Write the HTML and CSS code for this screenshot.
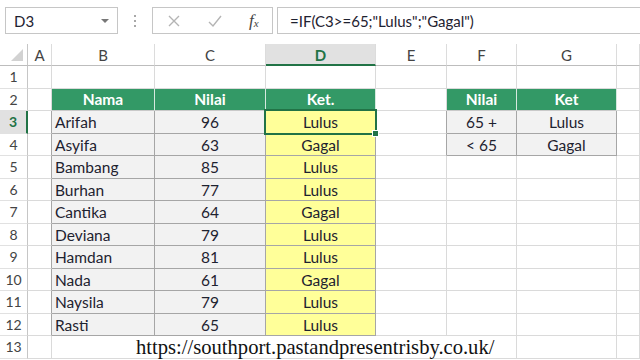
FILE: index.html
```html
<!DOCTYPE html>
<html lang="id">
<head>
  <meta charset="UTF-8">
  <title>Rumus IF - Nilai Siswa</title>
  <link rel="stylesheet" href="styles.css">
</head>
<body>
  <div class="toolbar">
    <div class="namebox">
      <span>D3</span>
      <span class="caret"></span>
    </div>
    <div class="dots"><i></i><i></i><i></i></div>
    <div class="fbuttons">
      <svg class="ico" width="14" height="14" viewBox="0 0 14 14"><path d="M2 2 L12 12 M12 2 L2 12" stroke="#b4b4b4" stroke-width="1.4" fill="none"/></svg>
      <svg class="ico" width="16" height="14" viewBox="0 0 16 14"><path d="M2 8 L6 12 L14 2" stroke="#b4b4b4" stroke-width="1.4" fill="none"/></svg>
      <span class="fx">f<sub>x</sub></span>
    </div>
    <div class="formula">=IF(C3&gt;=65;"Lulus";"Gagal")</div>
  </div>

  <div class="sheet">
    <div class="corner"><span class="tri"></span></div>
    <div class="colhead">A</div>
    <div class="colhead">B</div>
    <div class="colhead">C</div>
    <div class="colhead sel">D</div>
    <div class="colhead">E</div>
    <div class="colhead">F</div>
    <div class="colhead">G</div>
    <div class="colhead"></div>

    <div class="rowhead">1</div>
    <div class="c"></div><div class="c"></div><div class="c"></div><div class="c"></div><div class="c"></div><div class="c"></div><div class="c"></div><div class="c"></div>

    <div class="rowhead">2</div>
    <div class="c"></div>
    <div class="th">Nama</div><div class="th">Nilai</div><div class="th">Ket.</div>
    <div class="c"></div>
    <div class="th">Nilai</div><div class="th">Ket</div>
    <div class="c"></div>

    <div class="rowhead sel">3</div>
    <div class="c edge"></div>
    <div class="name">Arifah</div><div class="num">96</div><div class="ket active">Lulus</div>
    <div class="c edge"></div>
    <div class="num">65 +</div><div class="num">Lulus</div>
    <div class="c"></div>

    <div class="rowhead">4</div>
    <div class="c edge"></div>
    <div class="name">Asyifa</div><div class="num">63</div><div class="ket">Gagal</div>
    <div class="c edge"></div>
    <div class="num">&lt; 65</div><div class="num">Gagal</div>
    <div class="c"></div>

    <div class="rowhead">5</div>
    <div class="c edge"></div>
    <div class="name">Bambang</div><div class="num">85</div><div class="ket">Lulus</div>
    <div class="c"></div><div class="c"></div><div class="c"></div><div class="c"></div>

    <div class="rowhead">6</div>
    <div class="c edge"></div>
    <div class="name">Burhan</div><div class="num">77</div><div class="ket">Lulus</div>
    <div class="c"></div><div class="c"></div><div class="c"></div><div class="c"></div>

    <div class="rowhead">7</div>
    <div class="c edge"></div>
    <div class="name">Cantika</div><div class="num">64</div><div class="ket">Gagal</div>
    <div class="c"></div><div class="c"></div><div class="c"></div><div class="c"></div>

    <div class="rowhead">8</div>
    <div class="c edge"></div>
    <div class="name">Deviana</div><div class="num">79</div><div class="ket">Lulus</div>
    <div class="c"></div><div class="c"></div><div class="c"></div><div class="c"></div>

    <div class="rowhead">9</div>
    <div class="c edge"></div>
    <div class="name">Hamdan</div><div class="num">81</div><div class="ket">Lulus</div>
    <div class="c"></div><div class="c"></div><div class="c"></div><div class="c"></div>

    <div class="rowhead">10</div>
    <div class="c edge"></div>
    <div class="name">Nada</div><div class="num">61</div><div class="ket">Gagal</div>
    <div class="c"></div><div class="c"></div><div class="c"></div><div class="c"></div>

    <div class="rowhead">11</div>
    <div class="c edge"></div>
    <div class="name">Naysila</div><div class="num">79</div><div class="ket">Lulus</div>
    <div class="c"></div><div class="c"></div><div class="c"></div><div class="c"></div>

    <div class="rowhead">12</div>
    <div class="c edge"></div>
    <div class="name">Rasti</div><div class="num">65</div><div class="ket">Lulus</div>
    <div class="c"></div><div class="c"></div><div class="c"></div><div class="c"></div>

    <div class="rowhead">13</div>
    <div class="c"></div>
    <div class="c merged"><span class="mark">https://southport.pastandpresentrisby.co.uk/</span></div>
    <div class="c"></div><div class="c"></div><div class="c"></div>
  </div>
</body>
</html>
```

FILE: styles.css
```css
body {
  margin: 0;
  background: #fff;
  font-family: Lato, "Open Sans", sans-serif;
  color: #1e2230;
  overflow: hidden;
}

/* formula bar */
.toolbar {
  height: 44px;
  display: flex;
  align-items: flex-start;
  padding: 7px 0 0 5px;
  box-sizing: border-box;
  white-space: nowrap;
}
.namebox {
  width: 113px;
  height: 27px;
  box-sizing: border-box;
  border: 1px solid #c6c6c6;
  display: flex;
  align-items: center;
  justify-content: space-between;
  padding: 0 8px 0 8px;
  font-size: 15px;
}
.caret {
  width: 0;
  height: 0;
  border-left: 4px solid transparent;
  border-right: 4px solid transparent;
  border-top: 4px solid #777;
}
.dots {
  width: 34px;
  height: 27px;
  display: flex;
  flex-direction: column;
  align-items: center;
  justify-content: center;
  gap: 3px;
}
.dots i {
  width: 2px;
  height: 2px;
  background: #a8a8a8;
}
.fbuttons {
  width: 121px;
  height: 27px;
  box-sizing: border-box;
  border: 1px solid #c6c6c6;
  display: flex;
  align-items: center;
  padding-left: 14px;
  gap: 26px;
}
.fx {
  font-family: "Liberation Serif", serif;
  font-style: italic;
  font-size: 17px;
  color: #444;
}
.fx sub {
  font-size: 11px;
  vertical-align: -1px;
}
.formula {
  flex: 1;
  height: 27px;
  margin-left: 4px;
  box-sizing: border-box;
  border: 1px solid #c6c6c6;
  border-right: none;
  display: flex;
  align-items: center;
  padding-left: 12px;
  font-size: 15px;
}

/* sheet grid */
.sheet {
  display: grid;
  grid-template-columns: 28px 24px 103px 111px 110px 71px 70px 100px 23px;
  grid-template-rows: 22px repeat(13, 22.5px);
  font-size: 15.5px;
}
.sheet > div {
  box-sizing: border-box;
  display: flex;
  align-items: center;
  white-space: nowrap;
}
.corner {
  border-right: 1px solid #c6c6c6;
  border-bottom: 1px solid #bdbdbd;
  position: relative;
}
.tri {
  position: absolute;
  right: 4px;
  bottom: 4px;
  width: 0;
  height: 0;
  border-left: 12px solid transparent;
  border-bottom: 12px solid #d2d2d2;
}
.colhead {
  justify-content: center;
  color: #444;
  font-size: 15px;
  border-right: 1px solid #dcdcdc;
  border-bottom: 1px solid #bdbdbd;
  padding-top: 1px;
}
.colhead.sel {
  background: #e1e1e1;
  color: #217346;
  font-weight: bold;
  border-bottom: 2px solid #217346;
}
.rowhead {
  justify-content: center;
  color: #444;
  font-size: 14px;
  border-right: 1px solid #c6c6c6;
  border-bottom: 1px solid #e1e1e1;
}
.rowhead.sel {
  background: #e1e1e1;
  color: #217346;
  font-weight: bold;
  border-right: 2px solid #217346;
}
.c {
  border-right: 1px solid #dadada;
  border-bottom: 1px solid #dadada;
}
.c.edge {
  border-right-color: #a6a6a6;
}
.th {
  justify-content: center;
  background: #339966;
  color: #fff;
  font-weight: bold;
  border-right: 1px solid #d6e9df;
  border-bottom: 1px solid #c9c9c9;
}
.name, .num, .ket {
  background: #f2f2f2;
  border-right: 1px solid #a6a6a6;
  border-bottom: 1px solid #a6a6a6;
  padding-top: 1px;
}
.name {
  padding-left: 3px;
}
.num, .ket {
  justify-content: center;
}
.ket {
  background: #ffff99;
}
.active {
  position: relative;
}
.active::before {
  content: "";
  position: absolute;
  left: -2px;
  top: -2px;
  right: -2px;
  bottom: -2px;
  border: 2px solid #217346;
}
.active::after {
  content: "";
  position: absolute;
  right: -4px;
  bottom: -4px;
  width: 5px;
  height: 5px;
  background: #217346;
  border: 1px solid #fff;
}
.merged {
  grid-column: span 4;
  overflow: visible;
  border-right: none;
}
.mark {
  padding-left: 84px;
  padding-top: 2px;
  font-family: "Liberation Serif", serif;
  font-size: 20.6px;
  color: #111;
  position: relative;
  z-index: 1;
}
```
